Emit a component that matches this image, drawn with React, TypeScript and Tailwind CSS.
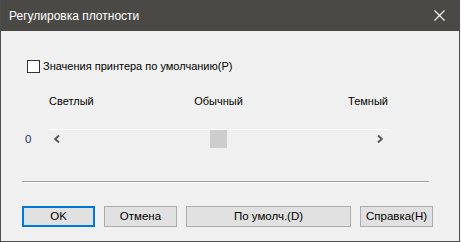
import React, { useState } from "react";

const FONT = { fontFamily: '"Liberation Sans", Arial, sans-serif' };

const DialogButton: React.FC<{
  label: string;
  width: string;
  primary?: boolean;
}> = ({ label, width, primary }) => (
  <button
    className={`${width} h-[21px] bg-[#e1e1e1] text-[11.5px] text-black leading-none flex items-center justify-center ${
      primary ? "border-2 border-[#0078d7]" : "border border-[#adadad]"
    }`}
  >
    {label}
  </button>
);

export default function App() {
  const [useDefaults, setUseDefaults] = useState(false);
  const value = 0;

  return (
    <div className="w-[461px] h-[242px] bg-[#f0f0f0]" style={FONT}>
      <div className="w-[460px] h-[242px] flex flex-col border-x border-b border-[#4f4f4f] bg-[#f0f0f0]">
        {/* Title bar */}
        <div className="h-[31px] shrink-0 bg-[#4b4946] flex items-center justify-between pl-[8px] pr-[10px]">
          <span className="text-white text-[12px]">Регулировка плотности</span>
          <svg width="11" height="11" viewBox="0 0 11 11" className="mr-[4px]">
            <path d="M0.5 0.5 L10.5 10.5 M10.5 0.5 L0.5 10.5" stroke="#fff" strokeWidth="1.1" />
          </svg>
        </div>

        {/* Checkbox */}
        <label className="mt-[29px] ml-[26px] flex items-center gap-[3px] h-[13px] text-[11px] text-black">
          <span
            onClick={() => setUseDefaults(!useDefaults)}
            className="w-[13px] h-[13px] border border-[#333] bg-white shrink-0"
          />
          <span>Значения принтера по умолчанию(P)</span>
        </label>

        {/* Scale labels */}
        <div className="mt-[21px] ml-[48px] w-[339px] grid grid-cols-3 text-[11px] text-black leading-[14px]">
          <span className="text-left">Светлый</span>
          <span className="text-center">Обычный</span>
          <span className="text-right">Темный</span>
        </div>

        {/* Slider */}
        <div className="mt-[21px] flex">
          <span className="w-[48px] pl-[24px] pt-[4px] text-[11.5px] text-[#14306a] leading-[12px]">
            {value}
          </span>
          <div className="relative w-[339px] h-[20px] border-t border-white">
            <svg width="6" height="8" viewBox="0 0 6 8" className="absolute left-[5px] top-[5px]">
              <path d="M5 0.5 L1.2 4 L5 7.5" stroke="#5a5a5a" strokeWidth="2" fill="none" />
            </svg>
            <div className="absolute left-[161px] top-0 w-[17px] h-[18px] bg-[#cdcdcd]" />
            <svg width="6" height="8" viewBox="0 0 6 8" className="absolute left-[328px] top-[5px]">
              <path d="M1 0.5 L4.8 4 L1 7.5" stroke="#5a5a5a" strokeWidth="2" fill="none" />
            </svg>
          </div>
        </div>

        {/* Separator */}
        <div className="mt-[32px] ml-[21px] w-[407px] border-t border-[#a0a0a0] border-b border-b-white" />

        {/* Buttons */}
        <div className="mt-[23px] ml-[21px] flex gap-[9px]">
          <DialogButton label="OK" width="w-[73px]" primary />
          <DialogButton label="Отмена" width="w-[73px]" />
          <DialogButton label="По умолч.(D)" width="w-[165px]" />
          <DialogButton label="Справка(H)" width="w-[73px]" />
        </div>
      </div>
    </div>
  );
}
